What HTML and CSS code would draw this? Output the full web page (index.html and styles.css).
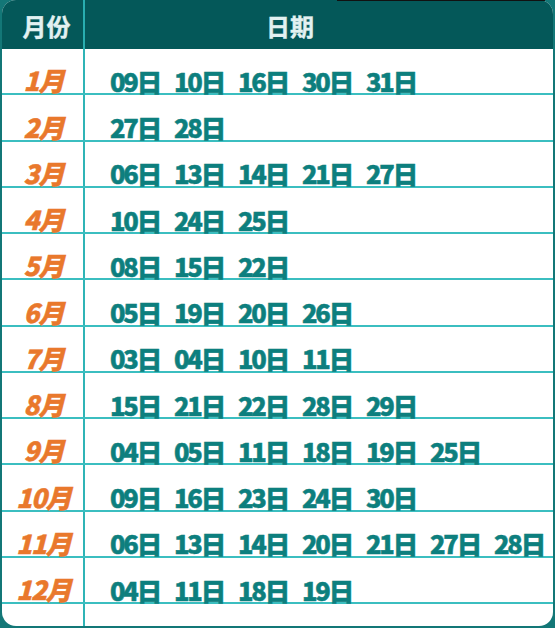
FILE: index.html
```html
<!DOCTYPE html>
<html lang="zh">
<head>
<meta charset="utf-8">
<link rel="stylesheet" href="styles.css">
</head>
<body>
<div class="topline"></div>
<div class="table">
  <div class="head">
    <div class="hcell hmonth">月份</div>
    <div class="hcell hdate">日期</div>
  </div>
  <div class="row"><div class="month">1月</div><div class="dates"><span>09日</span><span>10日</span><span>16日</span><span>30日</span><span>31日</span></div></div>
  <div class="row"><div class="month">2月</div><div class="dates"><span>27日</span><span>28日</span></div></div>
  <div class="row"><div class="month">3月</div><div class="dates"><span>06日</span><span>13日</span><span>14日</span><span>21日</span><span>27日</span></div></div>
  <div class="row"><div class="month">4月</div><div class="dates"><span>10日</span><span>24日</span><span>25日</span></div></div>
  <div class="row"><div class="month">5月</div><div class="dates"><span>08日</span><span>15日</span><span>22日</span></div></div>
  <div class="row"><div class="month">6月</div><div class="dates"><span>05日</span><span>19日</span><span>20日</span><span>26日</span></div></div>
  <div class="row"><div class="month">7月</div><div class="dates"><span>03日</span><span>04日</span><span>10日</span><span>11日</span></div></div>
  <div class="row"><div class="month">8月</div><div class="dates"><span>15日</span><span>21日</span><span>22日</span><span>28日</span><span>29日</span></div></div>
  <div class="row"><div class="month">9月</div><div class="dates"><span>04日</span><span>05日</span><span>11日</span><span>18日</span><span>19日</span><span>25日</span></div></div>
  <div class="row"><div class="month">10月</div><div class="dates"><span>09日</span><span>16日</span><span>23日</span><span>24日</span><span>30日</span></div></div>
  <div class="row"><div class="month">11月</div><div class="dates"><span>06日</span><span>13日</span><span>14日</span><span>20日</span><span>21日</span><span>27日</span><span>28日</span></div></div>
  <div class="row"><div class="month">12月</div><div class="dates"><span>04日</span><span>11日</span><span>18日</span><span>19日</span></div></div>
  <div class="filler"><div class="month"></div><div class="dates"></div></div>
</div>
</body>
</html>
```

FILE: styles.css
```css
html, body {
  margin: 0;
  padding: 0;
}
body {
  width: 555px;
  height: 628px;
  background: #137777;
  font-family: "Noto Sans CJK SC", "Noto Sans", sans-serif;
  position: relative;
  overflow: hidden;
}
.topline {
  position: absolute;
  top: 0;
  left: 337px;
  width: 208px;
  height: 1px;
  background: #111;
  z-index: 2;
}
.table {
  margin: 0 2px;
  height: 626px;
  background: #fff;
  border-radius: 14px;
  overflow: hidden;
  display: flex;
  flex-direction: column;
}
.head {
  height: 49px;
  flex: none;
  background: #045859;
  display: grid;
  grid-template-columns: 83px 1fr;
}
.hcell {
  color: #e2f1f1;
  font-weight: 700;
  font-size: 24px;
  line-height: 51px;
  -webkit-text-stroke: 0.4px #e2f1f1;
}
.hmonth {
  text-align: center;
  padding-left: 8px;
  border-right: 2px solid #29aeb0;
}
.hdate {
  padding-left: 181px;
}
.row {
  height: 46.27px;
  flex: none;
  box-sizing: border-box;
  display: grid;
  grid-template-columns: 83px 1fr;
  border-bottom: 2px solid #3bbec0;
}
.month {
  border-right: 2px solid #2fb4b6;
  color: #e9782c;
  font-style: italic;
  font-weight: 900;
  font-size: 26px;
  line-height: 1;
  letter-spacing: -1px;
  -webkit-text-stroke: 0.5px #e9782c;
  display: flex;
  align-items: flex-end;
  justify-content: center;
  padding-left: 2px;
}
.dates {
  display: grid;
  grid-template-columns: repeat(7, 64px);
  align-items: end;
  padding-left: 25px;
  color: #0d7f7e;
  font-weight: 900;
  font-size: 25.5px;
  line-height: 1;
  letter-spacing: -2.2px;
  -webkit-text-stroke: 0.5px #0d7f7e;
}
.filler {
  flex: 1;
  display: grid;
  grid-template-columns: 83px 1fr;
}
```
